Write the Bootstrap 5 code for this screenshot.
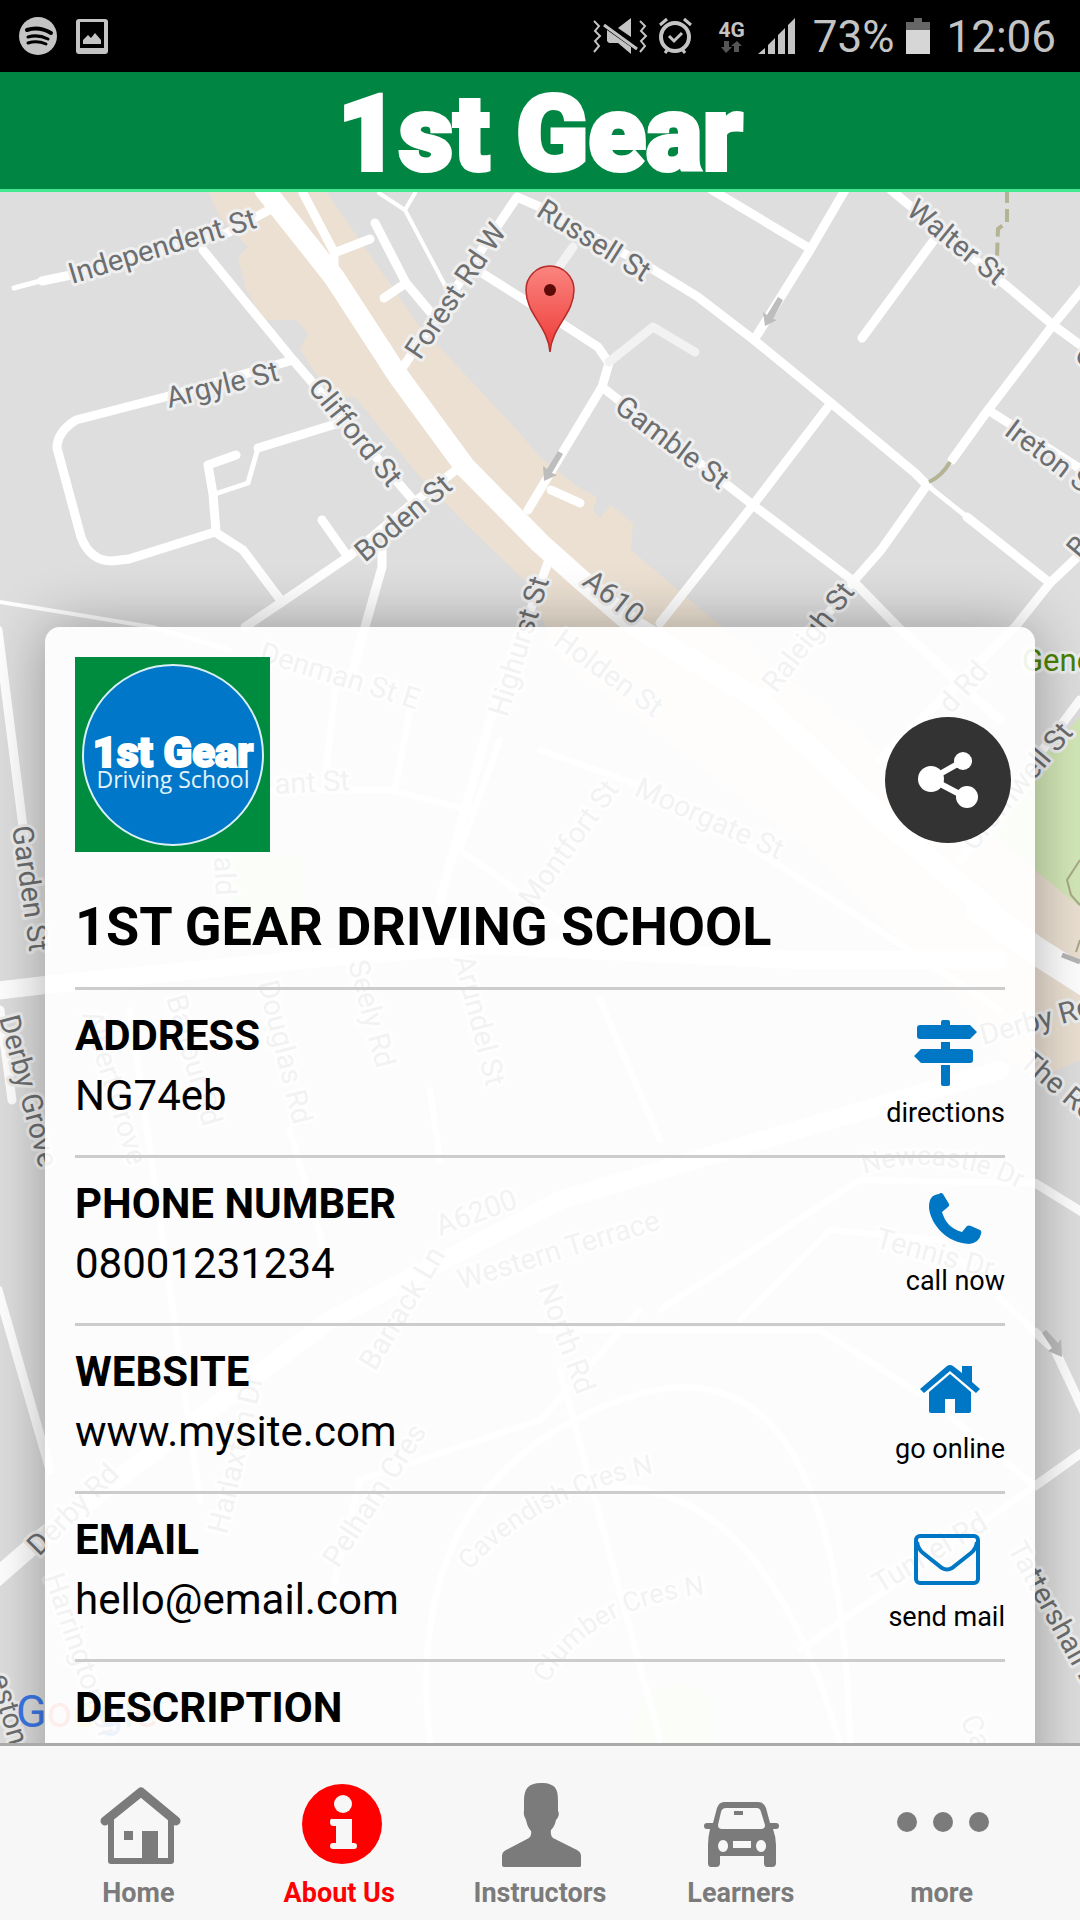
<!DOCTYPE html>
<html lang="en">
<head>
<meta charset="utf-8">
<meta name="viewport" content="width=device-width, initial-scale=1">
<title>1st Gear – About Us</title>
<link href="https://cdn.jsdelivr.net/npm/bootstrap@5.3.0/dist/css/bootstrap.min.css" rel="stylesheet">
<style>
  body { font-family: Roboto, "Liberation Sans", sans-serif; color: #000; background: #f7f7f7; }
  .app { height: 100vh; min-height: 1200px; }
  .statusbar { height: 72px; background: #000; color: #c4c4c4; font-size: 44px; line-height: 60px; padding: 2px 24px 0 18px; }
  .net { width: 30px; font-size: 21px; line-height: 20px; }
  .brandbar { height: 120px; background: #008542; border-bottom: 3px solid #44e890; padding-top: 4px; }
  .brand-title { font-family: Impact, Roboto, sans-serif; font-weight: 900; font-size: 106px; line-height: 117px; color: #fff; -webkit-text-stroke: 4px #fff; }
  .stage { min-height: 0; padding: 435px 45px 0; }
  .map-canvas { position: absolute; inset: 0; width: 100%; height: 100%; }
  .panel { position: relative; background: rgba(255,255,255,.91); border-radius: 15px 15px 0 0; padding: 30px 30px 0; box-shadow: 0 0 60px rgba(0,0,0,.32); }
  .school-logo { width: 195px; height: 195px; }
  .share-btn { width: 126px; height: 126px; border: 0; border-radius: 50%; background: #333; margin: 0 -6px 9px 0; }
  .school-name { font-size: 54px; line-height: 66px; font-weight: 700; margin: 42px 0 27px; }
  .info-row { height: 168px; border-top: 3px solid #ccc; padding-top: 16px; }
  .info-row h2, .info-row p { font-size: 42px; line-height: 60px; margin: 0; }
  .info-row h2 { font-weight: 700; }
  .action { font-size: 27px; line-height: 36px; color: #000; gap: 9px; padding-top: 14px; }
  .action svg { width: 66px; height: 66px; fill: #0077c5; }
  .tabbar { height: 177px; background: #f7f7f7; border-top: 3px solid #aaa; padding: 37px 38px 0; }
  .tab-item { flex: 1 1 0; font-size: 27px; line-height: 36px; font-weight: 700; color: #7b7b7b; gap: 8px; }
  .tab-item svg { width: 100px; height: 84px; fill: currentColor; }
  .tab-item.active { color: #f00; }
  .roads path { fill: none; stroke: #fff; stroke-width: 9; stroke-linecap: round; stroke-linejoin: round; }
  .streets text { font-size: 29px; fill: #6c6e70; stroke: #efefef; stroke-width: 6px; paint-order: stroke; stroke-linejoin: round; }
  .streets .arc-name { font-size: 27px; }
  .streets .park-name { font-size: 31px; fill: #4a8200; }
  .streets .map-mark { font-size: 45px; stroke: none; }
</style>
<script src="https://cdn.jsdelivr.net/npm/bootstrap@5.3.0/dist/js/bootstrap.bundle.min.js"></script>
</head>
<body>
<div class="app d-flex flex-column overflow-hidden">

  <div class="statusbar d-flex align-items-center justify-content-between flex-shrink-0">
    <div class="d-flex align-items-center" aria-hidden="true">
      <svg width="92" height="72" viewBox="18 1 92 72">
        <circle cx="38" cy="36" r="19" fill="#c4c4c4"/>
        <g fill="none" stroke="#000" stroke-linecap="round"><path d="M27 30q12-4 24 3" stroke-width="4"/><path d="M28 37q10-3 20 2" stroke-width="3"/><path d="M28 43q9-3 18 1" stroke-width="3"/></g>
        <rect x="76" y="19" width="32" height="35" rx="3" fill="#c4c4c4"/><path d="M80 22h24v26H80z"/>
        <path d="M83 44v-4l5-5 3 3 4-5 6 7v4z" fill="#c4c4c4"/>
      </svg>
    </div>
    <div class="d-flex align-items-center">
      <svg width="100" height="72" viewBox="600 1 100 72" fill="none" stroke="#c4c4c4" stroke-width="2">
        <path d="M601 21l5 5-4 5 5 5-5 5 4 5-5 6M647 21l5 5-4 5 5 5-5 5 4 5-5 6"/>
        <path d="M638 18v19l-13-9zM614 30l24 17v7l-13-11h-9l-2-2z" fill="#c4c4c4" stroke="none"/><path d="M611 25l33 24" stroke-width="3"/>
        <circle cx="682" cy="37" r="14" stroke-width="4"/><path d="M676 36l5 5 8-8" stroke-width="3"/><path d="M667 25l7-6M698 25l-7-6M672 53l3-4M692 53l-3-4" stroke-width="3"/>
      </svg>
      <div class="net d-flex flex-column align-items-center fw-bold ms-4 me-2">4G
        <svg width="24" height="14" viewBox="0 0 24 14" fill="#555"><path d="M4 1h5v6h3l-6 6-5-6h3zM14 12h5V6h3l-5-5-6 5h3z"/></svg>
      </div>
      <svg width="42" height="72" viewBox="760 1 42 72" fill="#c4c4c4"><path d="M763 54l7-6v6zM773 45l7-7v16h-7zM783 35l7-7v26h-7zM793 25l7-7v36h-7z"/></svg>
      <span class="ms-3">73%</span>
      <svg class="mx-2" width="32" height="72" viewBox="903 1 32 72"><path d="M907 22h8v-4h8v4h8v9h-24z" fill="#666"/><path d="M907 30h24v24h-24z" fill="#d6d6d6"/></svg>
      <span class="ms-1">12:06</span>
    </div>
  </div>

  <header class="brandbar d-flex justify-content-center flex-shrink-0">
    <h1 class="brand-title m-0">1st Gear</h1>
  </header>

  <main class="stage position-relative flex-grow-1 d-flex flex-column overflow-hidden">
    <svg class="map-canvas" viewBox="0 192 1080 1551" preserveAspectRatio="xMidYMin slice" role="img" aria-label="Map">
      <defs><linearGradient id="pinFill" x1="0" y1="0" x2="0" y2="1"><stop offset="0" stop-color="#fb8580"/><stop offset="1" stop-color="#ee3a36"/></linearGradient></defs>
      <rect y="192" width="1080" height="1551" fill="#dedede"/>
      <path fill="#ebe0d2" d="M208 190L220 217 248 247 238 257 245 287 263 320 296 320 308 333 300 350 331 397 355 397 420 477 465 523 527 583 560 660 815 853 1035 1080 1080 1060V905L1035 870 722 627 678 590 631 550 633 523 611 505 600 518 593 510 597 497 578 487 540 457 517 430 417 323 325 190z"/>
      <path fill="#d3e8b8" d="M1080 717L1035 763 990 830 1035 870 1080 907zM640 1700a46 36 0 0 1 74 0v50h-84zM232 855h74v85h-74z"/>
      <g class="roads">
        <path style="stroke-width:21" d="M265 190L334 277 399 377 465 467 540 543 578 577 636 627 760 700 884 820 990 910"/>
        <path style="stroke-width:28" d="M980 910L1035 950 1090 985"/>
        <path style="stroke-width:18" d="M-5 991L45 985 300 960 480 945 800 960 1000 960M-10 1583L45 1535 130 1470 330 1320 560 1200 1000 1070"/>
        <path d="M14 288L40 281" style="stroke-width:5"/><path d="M42 281L71 275 227 233 269 210M303 193L334 252 334 277M334 253L370 239M375 223L406 283 384 298M406 283L437 320"/>
        <path style="stroke-width:4" d="M379 193L405 210 449 293M405 210L415 193M0 602L152 627 230 650"/>
        <path d="M203 250L293 360 413 500M399 373L517 197 540 207 654 270 698 297 754 340 831 403 915 473 927 485"/>
        <path style="stroke-width:5" d="M927 485L967 517M339 423L258 448 248 483 215 494"/>
        <path d="M967 517L1050 583M482 273L561 323 598 347 609 363 602 387 540 490 528 510M551 490L580 503M602 387L753 505 852 580 898 627 1000 720"/>
        <path style="stroke:#f2f2f2" d="M609 362L653 327 695 352M573 247L559 267"/>
        <path d="M712 190L809 248M845 190L810 250 754 340M934 240L862 338M891 190L1008 287 1053 325 1090 352M1090 280L1053 325 988 410 952 460M988 410L1090 475M831 403L753 505 660 623M927 485L881 550 852 583 760 700M1090 545L1050 583 1015 627 880 760"/>
        <path d="M293 360L165 397 76 420Q57 432 57 448L81 537Q90 561 112 561L129 559 215 532 243 550 282 602M236 455L208 465 213 494 216 532M339 423L258 448M322 520L348 557M465 463L413 503 348 557 282 602 245 627M382 550V567L365 627 353 670M550 557L490 720 440 900"/>
        <path d="M-2 630L24 835M0 1010L12 1100M-2 1290L50 1470M1080 700L1035 760 960 860M1035 1183L1090 1217M1035 1332L1055 1350 1090 1425M1035 1486L1090 1447"/>
        <path style="stroke-width:6" d="M335 690L325 780M230 790H390L470 810M410 710L395 790M500 740L460 850 600 950M540 750L680 800 1000 1010M130 1010L200 1500M290 1130L330 1270M430 1090L440 1160M600 1000L660 1140M640 1310L540 1420 360 1480 330 1600M560 1370L660 1740M660 1310L860 1180 1035 1183M740 1320L830 1230 940 1240 1035 1332M540 1330H820L930 1400 1035 1486M430 1743Q400 1480 620 1400T850 1743M540 1500Q750 1430 840 1743M800 1650L1035 1486"/>
      </g>
      <path d="M1007 190V222L998 229 997 257" fill="none" stroke="#b4b494" stroke-width="4" stroke-dasharray="13 6"/>
      <path d="M950 462Q942 476 929 482" fill="none" stroke="#b4b494" stroke-width="4"/>
      <path d="M1080 860L1067 880 1071 895 1080 905M1080 940L1076 952" fill="none" stroke="#a9a987" stroke-width="2"/>
      <path d="M1062 955L1080 962" stroke="#b5b5b5" stroke-width="5"/>
      <g fill="#bdbdbd"><path d="M778 297l5 3-10 19 4 1-12 6-2-14 4 3zM558 451l5 3-11 19 5 2-13 6-1-15 4 3zM1042 1333l4-3 12 13 3-4 1 18-14-6 4-3z"/></g>
      <g class="streets">
        <text transform="translate(72 284) rotate(-17)">Independent St</text>
        <text transform="translate(169 408) rotate(-14)">Argyle St</text>
        <text transform="translate(307 388) rotate(51)">Clifford St</text>
        <text transform="translate(365 563) rotate(-40)">Boden St</text>
        <text transform="translate(420 361) rotate(-56)">Forest Rd W</text>
        <text transform="translate(535 215) rotate(32)">Russell St</text>
        <text transform="translate(905 213) rotate(39)">Walter St</text>
        <text transform="translate(613 410) rotate(37)">Gamble St</text>
        <text transform="translate(1003 434) rotate(37)">Ireton St</text>
        <text transform="translate(581 584) rotate(38)">A610</text>
        <text transform="translate(507 718) rotate(-73)">Highurst St</text>
        <text transform="translate(776 694) rotate(-52)">Raleigh St</text>
        <text transform="translate(1073 358) rotate(38)">C</text>
        <text transform="translate(1080 560) rotate(-50)">B</text>
        <text transform="translate(258 661) rotate(17)">Denman St E</text>
        <text transform="translate(552 644) rotate(36)">Holden St</text>
        <text transform="translate(633 795) rotate(24)">Moorgate St</text>
        <text transform="translate(533 909) rotate(-54)">Montfort St</text>
        <text transform="translate(275 794) rotate(-3)">ant St</text>
        <text transform="translate(214 857) rotate(87)">ald</text>
        <text transform="translate(348 963) rotate(75)">Seely Rd</text>
        <text transform="translate(454 958) rotate(76)">Arundel St</text>
        <text transform="translate(258 983) rotate(76)">Douglas Rd</text>
        <text transform="translate(166 998) rotate(74)">Balfour Rd</text>
        <text transform="translate(82 1014) rotate(73)">Albert Grove</text>
        <text transform="translate(12 827) rotate(82)">Garden St</text>
        <text transform="translate(-1 1018) rotate(75)">Derby Grove</text>
        <text transform="translate(440 1236) rotate(-20)">A6200</text>
        <text transform="translate(461 1290) rotate(-17)">Western Terrace</text>
        <text transform="translate(375 1372) rotate(-59)">Barrack Ln</text>
        <text transform="translate(538 1288) rotate(70)">North Rd</text>
        <path id="ncArc" d="M864 1174Q950 1147 1040 1200" fill="none"/>
        <text class="arc-name"><textPath href="#ncArc">Newcastle Dr</textPath></text>
        <text transform="translate(874 1247) rotate(15)">Tennis Dr</text>
        <text transform="translate(227 1535) rotate(-77)">Harlaxton Dr</text>
        <text transform="translate(338 1569) rotate(-57)">Pelham Cres</text>
        <path id="cvArc" d="M470 1571Q540 1490 680 1468" fill="none"/>
        <text class="arc-name"><textPath href="#cvArc">Cavendish Cres N</textPath></text>
        <path id="clArc" d="M548 1684Q590 1600 730 1592" fill="none"/>
        <text class="arc-name"><textPath href="#clArc">Clumber Cres N</textPath></text>
        <text transform="translate(880 1594) rotate(-31)">Tunnel Rd</text>
        <text transform="translate(1007 1548) rotate(61)">Tattershall Dr</text>
        <text transform="translate(39 1557) rotate(-45)">Derby Rd</text>
        <text transform="translate(44 1577) rotate(71)">Harrington Dr</text>
        <text transform="translate(-10 1677) rotate(74)">eston</text>
        <text transform="translate(983 1045) rotate(-15)">Derby Rd</text>
        <text transform="translate(1018 1064) rotate(40)">The Ropewalk</text>
        <text transform="translate(1074 733) rotate(-50)" text-anchor="end">Cromwell St</text>
        <text transform="translate(951 715) rotate(-48)">d Rd</text>
        <text transform="translate(960 1720) rotate(66)">Castle</text>
        <text class="park-name" x="1022" y="671">General</text>
        <text class="map-mark" x="16" y="1727"><tspan fill="#3b78e7">G</tspan><tspan fill="#e94235">o</tspan><tspan fill="#fbbc05">o</tspan><tspan fill="#3b78e7">g</tspan><tspan fill="#34a853">l</tspan><tspan fill="#e94235">e</tspan></text>
      </g>
      <path d="M550 352C548 326 526 314 526 290a24 24 0 0 1 48 0C574 314 552 326 550 352z" fill="url(#pinFill)" stroke="#b52b27" stroke-width="1.5"/>
      <circle cx="550" cy="290" r="6" fill="#5c0b09"/>
    </svg>

    <article class="panel flex-grow-1">
      <div class="d-flex justify-content-between align-items-end">
        <svg class="school-logo" viewBox="0 0 195 195" role="img" aria-label="1st Gear Driving School">
          <rect width="195" height="195" fill="#008c3f"/>
          <circle cx="98" cy="98" r="90" fill="#0077c8" stroke="#d9f0f4" stroke-width="2"/>
          <text x="98" y="110" text-anchor="middle" fill="#fff" stroke="#fff" stroke-width="2" font-family="Impact, Roboto, sans-serif" font-weight="900" font-size="42">1st Gear</text>
          <text x="98" y="131" text-anchor="middle" fill="#e4f3fb" font-family="'Open Sans', sans-serif" font-size="23">Driving School</text>
        </svg>
        <button type="button" class="share-btn p-0" aria-label="Share">
          <svg width="126" height="126" viewBox="0 0 126 126" fill="#fff"><path d="M46 62L78 44M46 62L82 81" stroke="#fff" stroke-width="6"/><circle cx="46" cy="62" r="13"/><circle cx="78" cy="44" r="9"/><circle cx="82" cy="80" r="11"/></svg>
        </button>
      </div>
      <h2 class="school-name">1ST GEAR DRIVING SCHOOL</h2>

      <section class="info-row d-flex justify-content-between align-items-start">
        <div><h2>ADDRESS</h2><p>NG74eb</p></div>
        <a href="#directions" class="action d-flex flex-column align-items-center text-decoration-none">
          <svg viewBox="1 0 66 66"><path d="M29 5V2q0-2 2-2h5q2 0 2 2v3h20l7 7-7 7H8q-3 0-3-3V8q0-3 3-3zM29 22h9v7h20q3 0 3 3v8q0 3-3 3H9l-7-7 7-7h20zM29 45h9v19q0 2-2 2h-5q-2 0-2-2z"/></svg>directions</a>
      </section>
      <section class="info-row d-flex justify-content-between align-items-start">
        <div><h2>PHONE NUMBER</h2><p>08001231234</p></div>
        <a href="tel:08001231234" class="action d-flex flex-column align-items-center text-decoration-none">
          <svg viewBox="0 -1 66 66"><path d="M17 5q2-2 4 0l6 10q1 2-1 3l-6 5c3 10 9 17 20 20l5-6q2-1 4 0l9 4q2 1 1 4-2 9-12 10C25 54 9 36 7 19 7 9 10 6 17 5z"/></svg>call now</a>
      </section>
      <section class="info-row d-flex justify-content-between align-items-start">
        <div><h2>WEBSITE</h2><p>www.mysite.com</p></div>
        <a href="#website" class="action d-flex flex-column align-items-center text-decoration-none">
          <svg viewBox="0 1 66 66"><path d="M3 34L30 11q3-2 6 0l9 7v-7h10v16l8 7-4 4-26-22L7 38zM12 37l21-18 21 18v19q0 2-2 2H38V44H28v14H14q-2 0-2-2z"/></svg>go online</a>
      </section>
      <section class="info-row d-flex justify-content-between align-items-start">
        <div><h2>EMAIL</h2><p>hello@email.com</p></div>
        <a href="mailto:hello@email.com" class="action d-flex flex-column align-items-center text-decoration-none">
          <svg viewBox="0 0 66 66"><g fill="none" stroke="#0077c5" stroke-width="4"><rect x="2" y="12" width="62" height="47" rx="4"/><path d="M3 18q1 7 6 11l19 15q5 3 10 0l19-15q5-4 6-11"/></g></svg>send mail</a>
      </section>
      <section class="info-row">
        <h2>DESCRIPTION</h2>
      </section>
    </article>
  </main>

  <nav class="tabbar d-flex flex-shrink-0" aria-label="Main">
    <a href="#home" class="tab-item d-flex flex-column align-items-center text-decoration-none">
      <svg viewBox="0 0 100 84"><g fill="none" stroke="currentColor" stroke-linejoin="round"><path d="M17 38L53 9l35 29" stroke-width="9" stroke-linecap="round"/><path d="M23 36V78H83V36" stroke-width="6"/></g><path d="M36 48h9v9h-9zM54 48h16v30H54z"/></svg>Home</a>
    <a href="#about" class="tab-item active d-flex flex-column align-items-center text-decoration-none" aria-current="page">
      <svg viewBox="0 0 100 84"><circle cx="53" cy="41" r="40"/><g fill="#f7f7f7"><circle cx="54" cy="21" r="9"/><path d="M44 36h19v24h2q3 0 3 3t-3 3H44q-3 0-3-3t3-3h3V43h-3q-3 0-3-4t3-3z"/></g></svg>About Us</a>
    <a href="#instructors" class="tab-item d-flex flex-column align-items-center text-decoration-none">
      <svg viewBox="0 0 100 84"><path d="M51 0C67 0 68 8 68 18V28c2 3 0 7-2 9-1 5-3 8-5 10q-1 5 2 8l24 12q4 2 4 6v10q0 1-2 1H14q-2 0-2-2V73q0-4 4-6l23-12q3-3 2-7c-3-3-4-7-5-11q-3-5-2-9V18C34 6 38 0 51 0z"/></svg>Instructors</a>
    <a href="#learners" class="tab-item d-flex flex-column align-items-center text-decoration-none">
      <svg viewBox="0 0 100 84"><path fill-rule="evenodd" d="M33 19H67q6 0 8 6l4 15h6q3 0 3 3t-3 3h-3q3 8 3 16v18q0 4-4 4h-5q-3 0-3-4v-7H29v7q0 4-4 4h-5q-3 0-3-4V62q0-8 2-16h-3q-3 0-3-3t3-3h6l4-15q2-6 7-6zM35 25q-4 0-5 4l-3 13q0 4 4 4h39q4 0 4-4l-4-13q-1-4-4-4zM43 28h9v4h-9zM32 57a5 6 0 1 0 .1 0zM70 57a5 6 0 1 0 .1 0zM42 58h18v7H42z"/></svg>Learners</a>
    <a href="#more" class="tab-item d-flex flex-column align-items-center text-decoration-none">
      <svg viewBox="0 0 100 84"><circle cx="15" cy="39" r="10"/><circle cx="51" cy="39" r="10"/><circle cx="87" cy="39" r="10"/></svg>more</a>
  </nav>
</div>
</body>
</html>
